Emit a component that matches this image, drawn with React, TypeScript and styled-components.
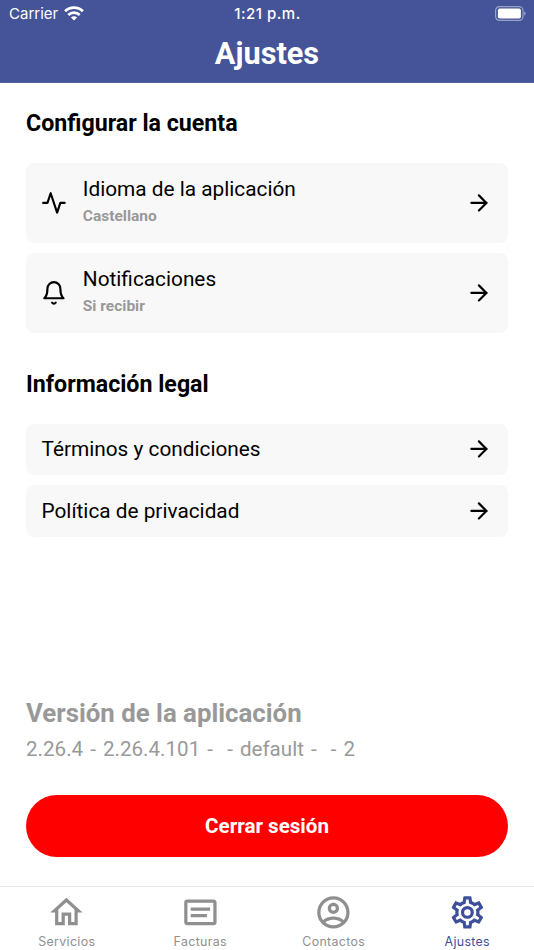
import React from 'react';
import styled, { createGlobalStyle } from 'styled-components';

const GlobalStyle = createGlobalStyle`
  * { box-sizing: border-box; }
  body { margin: 0; background: #fff; }
  h1, h2, h3, p { margin: 0; }
  button { border: 0; padding: 0; background: none; font: inherit; color: inherit; text-align: left; }
  svg { display: block; flex: none; }
`;

const Screen = styled.div`
  width: 534px;
  height: 950px;
  display: flex;
  flex-direction: column;
  overflow: hidden;
  background: #fff;
  color: #000;
  font-family: Roboto, sans-serif;
`;

const Header = styled.header`
  height: 83px;
  flex: none;
  background: #455498;
  color: #fff;
  border-bottom: 1px solid #5765a2;
`;

const StatusBar = styled.div`
  height: 27px;
  padding: 0 8px 0 9px;
  display: grid;
  grid-template-columns: 1fr auto 1fr;
  align-items: center;
  font: 400 15px/27px Inter, sans-serif;
`;

const Carrier = styled.div`
  display: flex;
  align-items: center;
  gap: 6px;
`;

const Clock = styled.div`
  font-weight: 500;
  letter-spacing: 0.5px;
`;

const BatterySlot = styled.div`
  display: flex;
  justify-content: flex-end;
`;

const Title = styled.h1`
  text-align: center;
  font-size: 30.7px;
  font-weight: 700;
  line-height: 53px;
`;

const Content = styled.main`
  flex: 1;
  padding: 26px 26px 0;
  display: flex;
  flex-direction: column;
`;

const SectionTitle = styled.h2`
  font-size: 23.2px;
  font-weight: 700;
  line-height: 28px;
`;

const List = styled.div<{ $last?: boolean }>`
  display: flex;
  flex-direction: column;
  gap: 10.5px;
  margin: 26px 0 ${(p) => (p.$last ? 0 : 36.5)}px;
`;

const Card = styled.button<{ $tall?: boolean }>`
  height: ${(p) => (p.$tall ? 79.8 : 51.4)}px;
  padding: 0 16px 0 15px;
  display: flex;
  align-items: center;
  border-radius: 8px;
  background: #f8f8f8;
`;

const CardText = styled.div<{ $indent?: boolean }>`
  flex: 1;
  margin-left: ${(p) => (p.$indent ? 16 : 0.5)}px;
  padding-bottom: ${(p) => (p.$indent ? 2 : 0)}px;
`;

const CardTitle = styled.div`
  font-size: 20.8px;
  line-height: 26px;
`;

const CardSubtitle = styled.div`
  padding: 3px 0 1px;
  font-size: 15.5px;
  font-weight: 700;
  line-height: 22px;
  color: #999;
`;

const VersionBlock = styled.section`
  margin-top: auto;
  color: #999;
`;

const VersionTitle = styled.h3`
  font-size: 25.8px;
  font-weight: 700;
  line-height: 28px;
`;

const VersionText = styled.p`
  padding-top: 9px;
  font-size: 20.6px;
  line-height: 26px;
  word-spacing: 1.95px;
  white-space: pre;
`;

const LogoutButton = styled.button`
  height: 62px;
  flex: none;
  margin: 33px 0 29px;
  border-radius: 31px;
  background: #f00;
  color: #fff;
  text-align: center;
  font-size: 20.6px;
  font-weight: 700;
`;

const TabBar = styled.nav`
  height: 64px;
  flex: none;
  display: grid;
  grid-template-columns: repeat(4, 1fr);
  border-top: 1px solid #e8e8e8;
`;

const Tab = styled.button<{ $active?: boolean }>`
  display: flex;
  flex-direction: column;
  align-items: center;
  padding-top: 6px;
  color: ${(p) => (p.$active ? '#3e509b' : '#8f8f8f')};
`;

const TabLabel = styled.span`
  margin-top: 2px;
  font: 400 12.4px/16px Inter, sans-serif;
  letter-spacing: 0.34px;
`;

function LineIcon({ children }: { children: React.ReactNode }) {
  return (
    <svg width="25.8" height="25.8" viewBox="0 0 24 24" fill="none" stroke="currentColor" strokeWidth="2" strokeLinecap="round" strokeLinejoin="round">
      {children}
    </svg>
  );
}

const Activity = () => <LineIcon><polyline points="22 12 18 12 15 21 9 3 6 12 2 12" /></LineIcon>;
const Bell = () => (
  <LineIcon>
    <path d="M18 8A6 6 0 0 0 6 8c0 7-3 9-3 9h18s-3-2-3-9" />
    <path d="M13.73 21a2 2 0 0 1-3.46 0" />
  </LineIcon>
);
const Arrow = () => (
  <LineIcon>
    <line x1="5" y1="12" x2="19" y2="12" />
    <polyline points="12 5 19 12 12 19" />
  </LineIcon>
);

const Wifi = () => (
  <svg width="20" height="15" viewBox="0 0 20 15" fill="none" stroke="#fff" strokeWidth="2.8">
    <path d="M1.1 5.3a12.6 12.6 0 0 1 17.8 0" />
    <path d="M4.3 8.9a8.1 8.1 0 0 1 11.4 0" />
    <path d="M10 14.6 6.9 11.6a4.4 4.4 0 0 1 6.2 0z" fill="#fff" stroke="none" />
  </svg>
);

const Battery = () => (
  <svg width="31" height="15" viewBox="0 0 31 15">
    <rect x="0.6" y="0.6" width="27.4" height="13.8" rx="3.8" fill="none" stroke="#fff" strokeOpacity="0.45" strokeWidth="1.2" />
    <rect x="2.9" y="2.6" width="23" height="9.9" rx="1.8" fill="#fff" />
    <path d="M29.2 5.2a2.6 2.6 0 0 1 0 4.6z" fill="#fff" fillOpacity="0.5" />
  </svg>
);

const tabs = [
  {
    label: 'Servicios',
    path: 'M12 5.69L17 10.19V18H15V12H9V18H7V10.19L12 5.69M12 3L2 12H5V20H11V14H13V20H19V12H22',
  },
  {
    label: 'Facturas',
    path: 'M20,20H4A2,2 0 0,1 2,18V6A2,2 0 0,1 4,4H20A2,2 0 0,1 22,6V18A2,2 0 0,1 20,20M4,6V18H20V6H4M6,9H18V11H6V9M6,13H16V15H6V13Z',
  },
  {
    label: 'Contactos',
    path: 'M12,2A10,10 0 0,0 2,12A10,10 0 0,0 12,22A10,10 0 0,0 22,12A10,10 0 0,0 12,2M7.07,18.28C7.5,17.38 10.12,16.5 12,16.5C13.88,16.5 16.5,17.38 16.93,18.28C15.57,19.36 13.86,20 12,20C10.14,20 8.43,19.36 7.07,18.28M18.36,16.83C16.93,15.09 13.46,14.5 12,14.5C10.54,14.5 7.07,15.09 5.64,16.83C4.62,15.5 4,13.82 4,12C4,7.59 7.59,4 12,4C16.41,4 20,7.59 20,12C20,13.82 19.38,15.5 18.36,16.83M12,6C10.06,6 8.5,7.56 8.5,9.5C8.5,11.44 10.06,13 12,13C13.94,13 15.5,11.44 15.5,9.5C15.5,7.56 13.94,6 12,6M12,11A1.5,1.5 0 0,1 10.5,9.5A1.5,1.5 0 0,1 12,8A1.5,1.5 0 0,1 13.5,9.5A1.5,1.5 0 0,1 12,11Z',
  },
  {
    label: 'Ajustes',
    active: true,
    path: 'M12,8A4,4 0 0,1 16,12A4,4 0 0,1 12,16A4,4 0 0,1 8,12A4,4 0 0,1 12,8M12,10A2,2 0 0,0 10,12A2,2 0 0,0 12,14A2,2 0 0,0 14,12A2,2 0 0,0 12,10M10,22C9.75,22 9.54,21.82 9.5,21.58L9.13,18.93C8.5,18.68 7.96,18.34 7.44,17.94L4.95,18.95C4.73,19.03 4.46,18.95 4.34,18.73L2.34,15.27C2.21,15.05 2.27,14.78 2.46,14.63L4.57,12.97L4.5,12L4.57,11L2.46,9.37C2.27,9.22 2.21,8.95 2.34,8.73L4.34,5.27C4.46,5.05 4.73,4.96 4.95,5.05L7.44,6.05C7.96,5.66 8.5,5.32 9.13,5.07L9.5,2.42C9.54,2.18 9.75,2 10,2H14C14.25,2 14.46,2.18 14.5,2.42L14.87,5.07C15.5,5.32 16.04,5.66 16.56,6.05L19.05,5.05C19.27,4.96 19.54,5.05 19.66,5.27L21.66,8.73C21.79,8.95 21.73,9.22 21.54,9.37L19.43,11L19.5,12L19.43,13L21.54,14.63C21.73,14.78 21.79,15.05 21.66,15.27L19.66,18.73C19.54,18.95 19.27,19.04 19.05,18.95L16.56,17.95C16.04,18.34 15.5,18.68 14.87,18.93L14.5,21.58C14.46,21.82 14.25,22 14,22H10M11.25,4L10.88,6.61C9.68,6.86 8.62,7.5 7.85,8.39L5.44,7.35L4.69,8.65L6.8,10.2C6.4,11.37 6.4,12.64 6.8,13.8L4.68,15.36L5.43,16.66L7.86,15.62C8.63,16.5 9.68,17.14 10.87,17.38L11.24,20H12.76L13.13,17.39C14.32,17.14 15.37,16.5 16.14,15.62L18.57,16.66L19.32,15.36L17.2,13.81C17.6,12.64 17.6,11.37 17.2,10.2L19.31,8.65L18.56,7.35L16.15,8.39C15.38,7.5 14.32,6.86 13.12,6.62L12.75,4H11.25Z',
  },
];

type SettingProps = { title: string; subtitle?: string; icon?: React.ReactNode };

function Setting({ title, subtitle, icon }: SettingProps) {
  return (
    <Card $tall={!!subtitle}>
      {icon}
      <CardText $indent={!!icon}>
        <CardTitle>{title}</CardTitle>
        {subtitle && <CardSubtitle>{subtitle}</CardSubtitle>}
      </CardText>
      <Arrow />
    </Card>
  );
}

export default function App() {
  return (
    <Screen>
      <GlobalStyle />
      <Header>
        <StatusBar>
          <Carrier>Carrier <Wifi /></Carrier>
          <Clock>1:21 p.m.</Clock>
          <BatterySlot><Battery /></BatterySlot>
        </StatusBar>
        <Title>Ajustes</Title>
      </Header>
      <Content>
        <SectionTitle>Configurar la cuenta</SectionTitle>
        <List>
          <Setting title="Idioma de la aplicación" subtitle="Castellano" icon={<Activity />} />
          <Setting title="Notificaciones" subtitle="Si recibir" icon={<Bell />} />
        </List>
        <SectionTitle>Información legal</SectionTitle>
        <List $last>
          <Setting title="Términos y condiciones" />
          <Setting title="Política de privacidad" />
        </List>
        <VersionBlock>
          <VersionTitle>Versión de la aplicación</VersionTitle>
          <VersionText>{'2.26.4 - 2.26.4.101 -  - default -  - 2'}</VersionText>
        </VersionBlock>
        <LogoutButton>Cerrar sesión</LogoutButton>
      </Content>
      <TabBar>
        {tabs.map((tab) => (
          <Tab key={tab.label} $active={tab.active}>
            <svg width="38.8" height="38.8" viewBox="0 0 24 24" fill="currentColor"><path d={tab.path} /></svg>
            <TabLabel>{tab.label}</TabLabel>
          </Tab>
        ))}
      </TabBar>
    </Screen>
  );
}
